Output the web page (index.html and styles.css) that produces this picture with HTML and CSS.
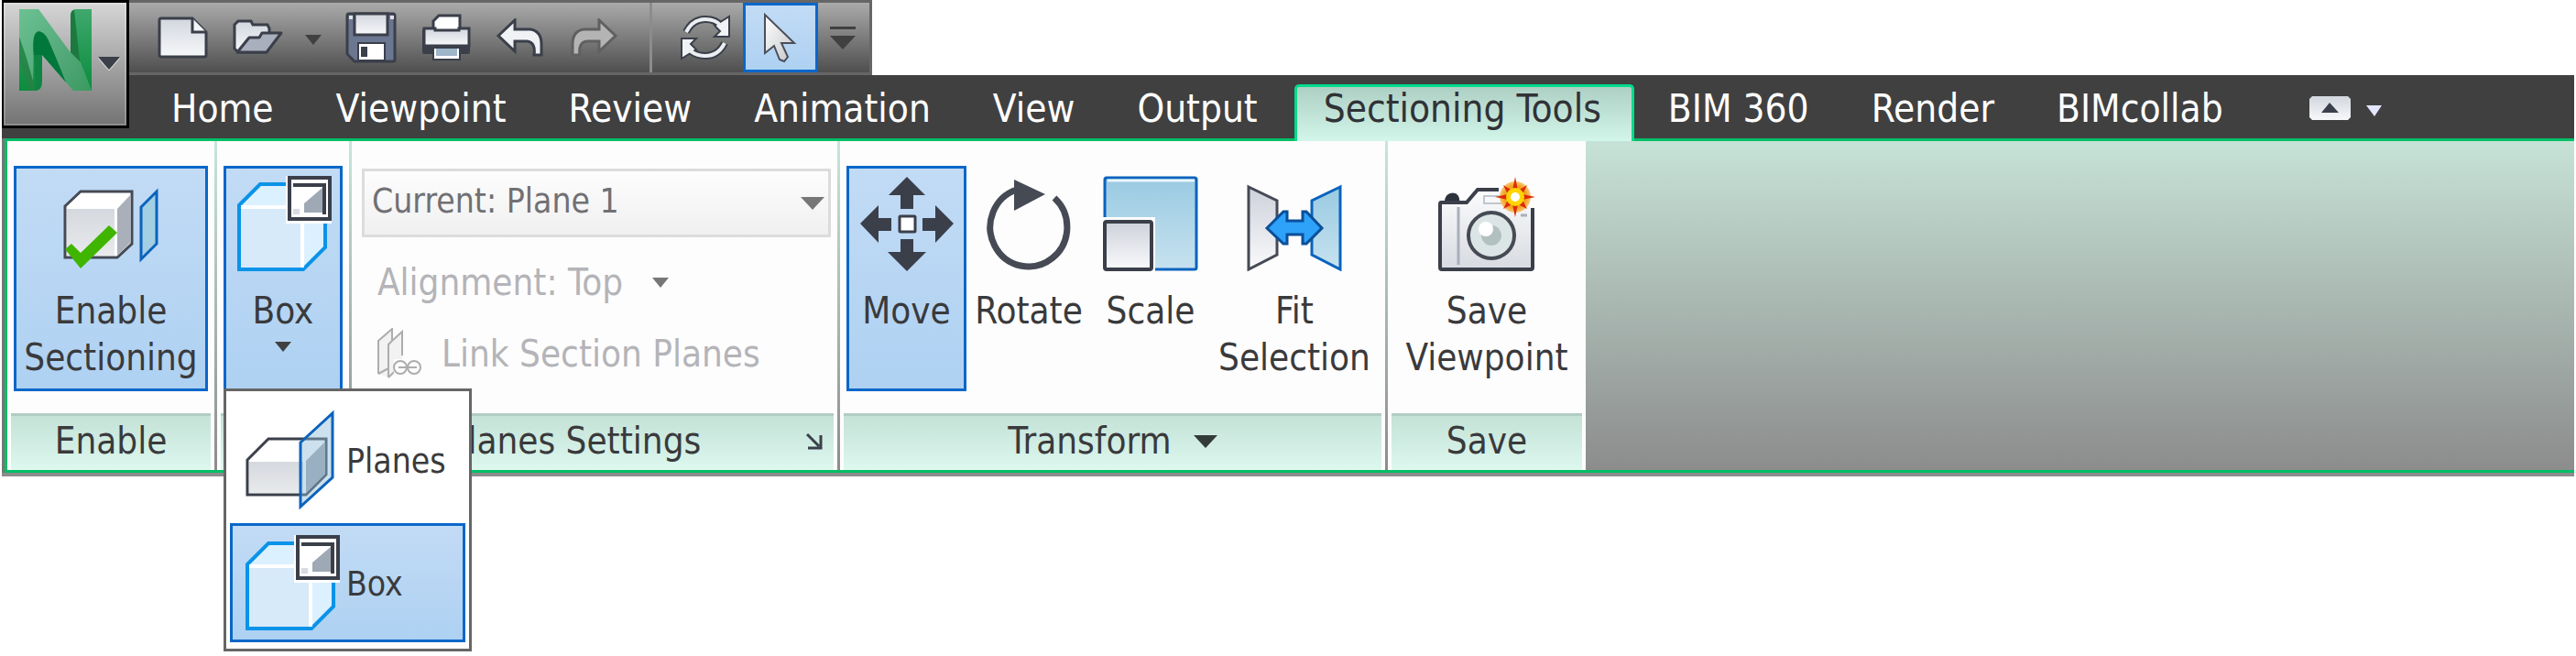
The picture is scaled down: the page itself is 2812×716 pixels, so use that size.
FILE: index.html
```html
<!DOCTYPE html>
<html lang="en">
<head>
<meta charset="utf-8">
<title>Sectioning Tools</title>
<link rel="stylesheet" href="styles.css">
</head>
<body>
<div class="app">
  <header class="head">
    <button class="app-button" type="button" aria-label="Application menu">
      <svg width="134" height="134" viewBox="4 3 134 134">
        <defs>
          <linearGradient id="n1" x1="0" y1="0" x2="1" y2="1"><stop offset="0" stop-color="#6cc192"/><stop offset=".6" stop-color="#52a878"/><stop offset="1" stop-color="#3a9a60"/></linearGradient>
          <linearGradient id="n2" x1="0" y1="0" x2="0" y2="1"><stop offset="0" stop-color="#3fa86c"/><stop offset="1" stop-color="#0a8c3e"/></linearGradient>
        </defs>
        <path d="M21 10H39L45 40V88Q45 99 38 99H21Z" fill="url(#n2)"/>
        <path d="M21 40L40 99H32L21 66Z" fill="#2f7d48" opacity=".6"/>
        <path d="M77 18Q77 10 83 10H100V99H92L77 60Z" fill="url(#n2)"/>
        <path d="M77 18Q77 11 81 11L88 74L77 60Z" fill="#1c7a41"/>
        <path d="M21 10H42L76 56L88 68L100 99H80L46 60V34L37 44L36 88L28 60L21 40Z" fill="url(#n1)"/>
        <path d="M37 62Q34 36 42 34Q48 34 53 44L64 70L72 90L46 60L45 80Z" fill="#00783c"/>
        <path d="M37 60L46 60V88Q46 99 39 99Z" fill="#0f8443"/>
        <path d="M107 62H131L119 76Z" fill="#3a3f4a"/><path d="M107 63L119 77L131 63" fill="none" stroke="#ddd"/>
      </svg>
    </button>
    <div class="head-rows">
      <div class="quick">
        <button class="q q-new" type="button" aria-label="New"><svg width="56" height="46" viewBox="0 0 56 46"><path d="M3 4Q3 2 5 2H39L54 17V42Q54 44 52 44H5Q3 44 3 42Z" fill="url(#paper)" stroke="#3a3f4a" stroke-width="3"/><path d="M39 2V17H54" fill="#f4f5f7" stroke="#3a3f4a" stroke-width="3"/></svg></button>
        <button class="q q-open" type="button" aria-label="Open"><svg width="56" height="40" viewBox="0 0 56 40"><path d="M2 6L6 2H20L22 6H38L40 10V18L36 36H6L2 32Z" fill="url(#paper)" stroke="#3a3f4a" stroke-width="3"/><path d="M18 20H29L32 15H53L37 36H5Z" fill="#a9afbd" stroke="#3a3f4a" stroke-width="3" stroke-linejoin="round"/></svg></button>
        <button class="q q-open-more" type="button" aria-label="Open options"><svg width="18" height="12" viewBox="0 0 18 12"><path d="M0 1H18L9 12Z" fill="#404040"/></svg></button>
        <button class="q q-save" type="button" aria-label="Save"><svg width="56" height="56" viewBox="0 0 56 56"><path d="M4 2H52Q54 2 54 4V52Q54 54 52 54H10L2 46V4Q2 2 4 2Z" fill="#6b7690" stroke="#3a3f4a" stroke-width="3"/><path d="M10 2H46V25H10Z" fill="url(#paper)" stroke="#3a3f4a" stroke-width="3"/><path d="M4 6H8M49 6H53" stroke="#dfe2e8" stroke-width="4"/><path d="M14 34H43V53H14Z" fill="#fff" stroke="#3a3f4a" stroke-width="2"/><path d="M17 38H24V49H17Z" fill="#3a3f4a"/></svg></button>
        <button class="q q-print" type="button" aria-label="Print"><svg width="56" height="52" viewBox="0 0 56 52"><path d="M2 17H54V42Q54 44 52 44H4Q2 44 2 42Z" fill="#3a3f4a"/><path d="M14 19V8L20 2H43V19Z" fill="#fff" stroke="#3a3f4a" stroke-width="3"/><path d="M4 16H16V18H42V16H53V35H4Z" fill="url(#paper)" stroke="#3a3f4a" stroke-width="3"/><path d="M14 37H43V50H14Z" fill="#fff" stroke="#3a3f4a" stroke-width="2"/><path d="M17 38H40V46H17Z" fill="#9fb6ca"/></svg></button>
        <button class="q q-undo" type="button" aria-label="Undo"><svg width="52" height="42" viewBox="0 0 52 42"><path d="M3 19L21 2V12H38Q50 14 50 28V40H42Q44 26 34 25H21V36Z" fill="#f1f2f5" stroke="#3a3f4a" stroke-width="3"/></svg></button>
        <button class="q q-redo" type="button" aria-label="Redo"><svg width="52" height="42" viewBox="0 0 52 42"><path d="M49 19L31 2V12H14Q2 14 2 28V40H10Q8 26 18 25H31V36Z" fill="#b4b4b4" stroke="#606060" stroke-width="3"/></svg></button>
        <span class="q-line"></span>
        <button class="q q-refresh" type="button" aria-label="Refresh"><svg width="56" height="50" viewBox="0 0 56 50"><g fill="none" stroke="#3a3f4a" stroke-width="8"><path d="M7 19Q14 5 28 5Q39 5 45 12"/><path d="M49 31Q42 45 28 45Q17 45 10 38"/></g><path d="M54 2V24H38L44 18L38 12Z" fill="#f1f2f5" stroke="#3a3f4a" stroke-width="2"/><path d="M2 48V26H18L12 32L18 38Z" fill="#f1f2f5" stroke="#3a3f4a" stroke-width="2"/><g fill="none" stroke="#eceef2" stroke-width="4"><path d="M7 19Q14 5 28 5Q39 5 45 12"/><path d="M49 31Q42 45 28 45Q17 45 10 38"/></g></svg></button>
        <button class="q q-select" type="button" aria-label="Select" aria-pressed="true"><svg width="40" height="58" viewBox="0 0 40 58"><path d="M3 4V46L13 38L19 53L24 55L28 50L21 35H35Z" fill="url(#arrow)" stroke="#4a4f5a" stroke-width="2"/></svg></button>
        <button class="q q-custom" type="button" aria-label="Customize toolbar"><svg width="28" height="26" viewBox="0 0 28 26"><path d="M0 1H28V4H0ZM0 11H28L14 26Z" fill="#404040"/></svg></button>
      </div>
      <nav class="tabs">
        <a class="tab" href="#home">Home</a>
        <a class="tab" href="#viewpoint">Viewpoint</a>
        <a class="tab" href="#review">Review</a>
        <a class="tab" href="#animation">Animation</a>
        <a class="tab" href="#view">View</a>
        <a class="tab" href="#output">Output</a>
        <a class="tab tab-active" href="#sectioning" aria-current="page">Sectioning Tools</a>
        <a class="tab" href="#bim360">BIM 360</a>
        <a class="tab" href="#render">Render</a>
        <a class="tab" href="#bimcollab">BIMcollab</a>
        <button class="fold" type="button" aria-label="Minimize ribbon"><svg width="45" height="26" viewBox="0 0 45 26"><path d="M3 0H42L45 3V23L42 26H3L0 23V3Z" fill="url(#paper)"/><path d="M13 18L22 7L32 18Z" fill="#3a3f4a"/></svg></button>
        <button class="fold-more" type="button" aria-label="Ribbon options"><svg width="17" height="12" viewBox="0 0 17 12"><path d="M0 0H17L9 12Z" fill="#e4e6ff"/></svg></button>
      </nav>
    </div>
  </header>

  <main class="ribbon">
    <section class="panel p-enable">
      <div class="tools">
        <button class="tool tool-on t-enable" type="button" aria-pressed="true">
          <svg class="icon" width="106" height="104" viewBox="0 0 106 104">
            <path d="M3 33L20 17H76V74L60 89H3Z" fill="#fff" stroke="#454a54" stroke-width="3"/>
            <path d="M5 36H57V87H5Z" fill="url(#grey)"/><path d="M60 36L75 20V72L60 87Z" fill="#a9b0ba"/>
            <path d="M86 34L103 17V74L86 91Z" fill="#a3cfe3" stroke="#0a63bd" stroke-width="3"/>
            <path d="M3 80L10 74L20 84L51 54L60 62L20 101Z" fill="#3fb500"/>
          </svg>
          <span>Enable<br>Sectioning</span>
        </button>
      </div>
      <h2 class="title">Enable</h2>
    </section>
    <section class="panel p-mode">
      <div class="tools">
        <button class="tool tool-on t-box" type="button" aria-expanded="true">
          <svg class="icon" width="106" height="104" viewBox="0 0 106 104"><use href="#box"/></svg>
          <span>Box</span>
          <svg class="caret" width="18" height="11" viewBox="0 0 18 11"><path d="M0 0H18L9 11Z" fill="#404040"/></svg>
        </button>
        <div class="menu">
          <button class="item" type="button">
            <svg width="106" height="108" viewBox="0 0 106 108">
              <path d="M5 54L28 31H91V70L69 92H5Z" fill="#fff" stroke="#3a3f4a" stroke-width="3"/>
              <path d="M7 56H66V90H7Z" fill="url(#grey)"/><path d="M69 55L90 34V69L69 90Z" fill="#a0a7b1"/>
              <path d="M63 35L98 3V73L63 105Z" fill="#8ebdd6" fill-opacity=".45" stroke="#0a63bd" stroke-width="3"/>
            </svg>
            <span>Planes</span>
          </button>
          <button class="item item-on" type="button">
            <svg width="106" height="104" viewBox="0 0 106 104"><use href="#box"/></svg>
            <span>Box</span>
          </button>
        </div>
      </div>
      <div class="title"></div>
    </section>
    <section class="panel p-planes">
      <div class="tools form">
        <div class="combo">
          <select aria-label="Current plane" disabled><option>Current: Plane 1</option></select>
          <svg width="26" height="14" viewBox="0 0 26 14"><path d="M0 0H26L13 14Z" fill="#777"/></svg>
        </div>
        <button class="line" type="button" disabled><span>Alignment: Top</span><svg width="18" height="11" viewBox="0 0 18 11"><path d="M0 0H18L9 11Z" fill="#777"/></svg></button>
        <button class="line line-link" type="button" disabled><svg width="48" height="56" viewBox="0 0 48 56" fill="#f2f2f2" stroke="#adadad" stroke-width="2"><path d="M1 14L16 1V14L27 4V30V45L13 54L1 50Z" stroke="none"/><path d="M1 50V14L16 1V14L27 4V30M12 54V18L16 14M12 44L1 50M12 54L18 48" fill="none"/><path d="M18 34H48V54H18Z" fill="#fdfdfd" stroke="none"/><g fill="none"><circle cx="25" cy="43" r="7"/><circle cx="40" cy="43" r="7"/><path d="M23 43H43"/></g></svg><span>Link Section Planes</span></button>
      </div>
      <div class="title"><h2>Planes Settings</h2><button class="launch" type="button" aria-label="Planes settings dialog"><svg width="18" height="18" viewBox="0 0 18 18" fill="none" stroke="#3a3f4a" stroke-width="3"><path d="M1 1L14 14M16 2V16H2"/></svg></button></div>
    </section>
    <section class="panel p-transform">
      <div class="tools">
        <button class="tool tool-on t-move" type="button" aria-pressed="true">
          <svg class="icon" width="106" height="104" viewBox="0 0 106 104">
            <path d="M53 1L73 21H60V36H46V21H33ZM53 104L74 83H60V69H46V83H32ZM2 52L22 32V46H36V60H22V73ZM104 52L84 32V46H70V60H84V73Z" fill="#3a3f4a"/>
            <rect x="45" y="44" width="17" height="17" rx="1" fill="#fff" stroke="#3a3f4a" stroke-width="3"/>
          </svg>
          <span>Move</span>
        </button>
        <button class="tool t-rotate" type="button">
          <svg class="icon" width="106" height="104" viewBox="0 0 106 104">
            <path d="M81 24A42 43 0 1 1 40 15" fill="none" stroke="#454a54" stroke-width="7"/>
            <path d="M37 4L71 20L37 38Z" fill="#454a54"/>
          </svg>
          <span>Rotate</span>
        </button>
        <button class="tool t-scale" type="button">
          <svg class="icon" width="106" height="104" viewBox="0 0 106 104">
            <rect x="3" y="2" width="100" height="100" rx="2" fill="url(#blue)" stroke="#0a63bd" stroke-width="3"/><path d="M6 5H101" stroke="#e8f5fb" stroke-width="3"/>
            <path d="M0 45H58V104H0Z" fill="#fff"/><rect x="3" y="50" width="51" height="52" rx="2" fill="url(#silver)" stroke="#3a3f4a" stroke-width="4"/>
          </svg>
          <span>Scale</span>
        </button>
        <button class="tool t-fit" type="button">
          <svg class="icon" width="106" height="104" viewBox="0 0 106 104">
            <path d="M3 12L34 27V86L3 102Z" fill="url(#silver)" stroke="#454a54" stroke-width="3"/>
            <path d="M103 12L72 27V86L103 102Z" fill="url(#blue)" stroke="#0a63bd" stroke-width="3"/>
            <path d="M23 57L41 39H45V49H62V39H66L83 57L66 74H62V64H45V74H41Z" fill="#2ea1f8" stroke="#0a4f9a" stroke-width="3"/>
          </svg>
          <span>Fit<br>Selection</span>
        </button>
      </div>
      <div class="title"><h2>Transform</h2><svg width="26" height="14" viewBox="0 0 26 14"><path d="M0 0H26L13 14Z" fill="#333b38"/></svg></div>
    </section>
    <section class="panel p-save">
      <div class="tools">
        <button class="tool t-save" type="button">
          <svg class="icon" width="106" height="104" viewBox="0 0 106 104">
            <path d="M8 29Q9 20 16 20Q22 20 22 29Z" fill="#2d333d" stroke="#2d333d" stroke-width="3"/>
            <path d="M2 30H31L43 15H70L103 36V100Q103 102 101 102H4Q2 102 2 100Z" fill="url(#camera)"/>
            <path d="M66 15H43L31 29H3Q2 29 2 31V100Q2 102 4 102H101Q103 102 103 100V35" fill="none" stroke="#3a3f4a" stroke-width="4"/>
            <path d="M22 34V97" stroke="#a9afbb" stroke-width="3"/><path d="M50 22H70V30H50Z" fill="none" stroke="#c1c6cf" stroke-width="2"/><path d="M90 43H97" stroke="#a9afbb" stroke-width="3"/>
            <circle cx="58" cy="65" r="25" fill="#dce5e5" stroke="#454a54" stroke-width="4"/>
            <circle cx="58" cy="65" r="11" fill="#b3c0c0"/><circle cx="52" cy="58" r="8" fill="#fff"/>
            <circle cx="84" cy="23" r="17" fill="url(#sun)"/>
            <path d="M84 1L87 16L97 10L92 20L106 23L92 26L97 36L87 31L84 45L81 31L71 36L76 26L62 23L76 20L71 10L81 16Z" fill="#dd2a0a"/>
            <circle cx="84" cy="23" r="10" fill="#ffd400"/><circle cx="84" cy="23" r="5" fill="#fff"/>
          </svg>
          <span>Save<br>Viewpoint</span>
        </button>
      </div>
      <h2 class="title">Save</h2>
    </section>
  </main>
</div>
<svg class="defs" width="0" height="0" aria-hidden="true">
  <defs>
    <linearGradient id="paper" x1="0" y1="0" x2="0" y2="1"><stop offset="0" stop-color="#d2d6de"/><stop offset="1" stop-color="#f7f8fa"/></linearGradient>
    <linearGradient id="arrow" x1="0" y1="0" x2="1" y2="1"><stop offset="0" stop-color="#fff"/><stop offset="1" stop-color="#c4c6ca"/></linearGradient>
    <linearGradient id="grey" x1="0" y1="0" x2="0" y2="1"><stop offset="0" stop-color="#d5d8de"/><stop offset="1" stop-color="#e8eaec"/></linearGradient>
    <linearGradient id="silver" x1="0" y1="0" x2="0" y2="1"><stop offset="0" stop-color="#ced1db"/><stop offset="1" stop-color="#fafafc"/></linearGradient>
    <linearGradient id="blue" x1="0" y1="0" x2="0" y2="1"><stop offset="0" stop-color="#99cae2"/><stop offset="1" stop-color="#c7e2ef"/></linearGradient>
    <linearGradient id="camera" x1="0" y1="0" x2="0" y2="1"><stop offset="0" stop-color="#fcfcfd"/><stop offset="1" stop-color="#d7dae1"/></linearGradient>
    <radialGradient id="sun"><stop offset="0" stop-color="#ffe14a"/><stop offset=".7" stop-color="#f3a01c"/><stop offset="1" stop-color="#f9c878"/></radialGradient>
    <g id="box">
      <path d="M5 32L28 9H99V78L75 102H5Z" fill="#dcf1ff" stroke="#0a93e8" stroke-width="4"/>
      <path d="M7 34H73V100H7Z" fill="#d7eaf9"/><path d="M7 34H74V100M74 34L97 11" fill="none" stroke="#fff" stroke-width="4"/>
      <path d="M56 0H106V52H56Z" fill="#fff"/><rect x="60" y="2" width="44" height="45" fill="#fff" stroke="#3a3f4a" stroke-width="4"/>
      <path d="M76 40V30L97 12V40Z" fill="#9fa9b5"/><path d="M64 10H98V42" fill="none" stroke="#3a3f4a" stroke-width="4"/><path d="M64 36H71V42H64Z" fill="#d9dbe2"/>
    </g>
  </defs>
</svg>
</body>
</html>
```

FILE: styles.css
```css
* { box-sizing: border-box; }
body { margin: 0; background: #fff; color: #3a3a3c; font-family: "DejaVu Sans Condensed", "Noto Sans", sans-serif; font-size: 40px; line-height: 51px; }
button, select { margin: 0; padding: 0; border: 0; background: none; color: inherit; font: inherit; }
h2 { margin: 0; font: inherit; }
svg { display: block; flex: none; }
.defs { position: absolute; }
.app { min-height: 100vh; padding: 0 2px; }

.head { display: flex; background: linear-gradient(#fff 82px, #404040 82px); }
.app-button { display: flex; width: 139px; height: 140px; flex: none; border: 3px solid #000; border-left-width: 2px; background: linear-gradient(#d6d6d6, #737373); box-shadow: inset 0 0 0 2px #ffffff30; }
.head-rows { flex: 1; min-width: 0; }
.quick { display: flex; align-items: center; width: 811px; height: 82px; border: 3px solid #666; border-left: 0; background: linear-gradient(#aaa, #4f4f4f); }
.q { flex: none; display: flex; align-items: center; justify-content: center; }
.q-new { margin-left: 30px; }
.q-open { margin-left: 27px; }
.q-open-more { margin-left: 23px; margin-top: 4px; }
.q-save { margin-left: 26px; }
.q-print { margin-left: 26px; }
.q-undo { margin-left: 26px; }
.q-redo { margin-left: 30px; }
.q-line { width: 3px; height: 76px; margin-left: 34px; background: #8c8c8c; }
.q-refresh { margin-left: 30px; }
.q-select { width: 82px; height: 76px; margin-left: 13px; border: 3px solid #0a67c9; background: linear-gradient(#c2dbf5, #aed1f2); }
.q-custom { margin-left: 13px; }

.tabs { display: flex; align-items: flex-end; height: 69px; font-size: 42px; }
.tab { height: 62px; padding: 0 34px; color: #fff; line-height: 60px; text-decoration: none; white-space: nowrap; }
.tab:first-child { padding-left: 46px; }
.tab-active { position: relative; z-index: 1; padding: 0 33px 0 29px; margin: 0 3px -3px 6px; border: 3px solid #00dc8c; border-bottom: 0; border-radius: 5px 5px 0 0; color: #303236; line-height: 48px; background: linear-gradient(#aed0c4, #d3f6ea); }
.fold { margin: 0 0 20px 60px; }
.fold-more { margin: 0 0 24px 17px; }

.ribbon { display: flex; margin-left: 3px; border: 3px solid #00bf66; border-right: 0; background: linear-gradient(#c6e2d6, #8c8c8c); box-shadow: -3px 0 0 #777, -3px 4px 0 #8c8c8c, 0 4px 0 #8c8c8c; }
.panel { flex: none; display: flex; flex-direction: column; background: #fdfdfd; border-right: 3px solid; border-image: linear-gradient(#c8e6da, #8c8c8c) 1; }
.tools { position: relative; display: flex; padding: 27px 7px 24px; height: 297px; }
.tool { display: flex; flex-direction: column; align-items: center; height: 246px; padding-top: 8px; border: 3px solid transparent; text-align: center; white-space: nowrap; }
.tool-on { border-color: #0a67c9; background: linear-gradient(#c2dbf5, #aed1f2); }
.icon { margin-bottom: 18px; }
.caret { margin-top: 8px; }
.title { display: flex; align-items: center; justify-content: center; height: 62px; margin: 0 4px; padding-bottom: 4px; border-top: 3px solid #b1cdc2; background: linear-gradient(#c5e2d7, #dcf8ef); }
.p-enable { width: 229px; }
.t-enable { flex: 1; }
.p-mode { width: 147px; }
.t-box { flex: 1; }
.p-planes { width: 533px; }
.p-transform { width: 598px; }
.p-save { width: 216px; border-right: 0; }
.t-move { width: 131px; }
.t-rotate { width: 136px; }
.t-scale { width: 130px; }
.t-fit { flex: 1; }
.t-save { flex: 1; }

.form { flex-direction: column; align-items: flex-start; padding: 30px 7px 0 11px; }
.combo { position: relative; width: 100%; }
.combo select { display: block; width: 100%; height: 75px; padding: 0 0 5px 8px; border: 3px solid #dcdcde; background: linear-gradient(#fdfdfd, #f0f0f0); color: #707074; opacity: 1; font-size: 37px; appearance: none; }
.combo svg { position: absolute; right: 7px; top: 31px; pointer-events: none; }
.line { display: flex; align-items: center; gap: 22px; margin: 24px 0 0 17px; color: #b4b4b8; white-space: nowrap; }
.line:not(.line-link) { gap: 32px; }
.line-link { margin-top: 24px; }
.p-planes .title { padding-right: 12px; }
.p-planes .title h2 { flex: 1; padding-right: 14px; text-align: center; }
.p-transform .title { gap: 24px; }

.menu { position: absolute; z-index: 2; top: 270px; left: 7px; width: 271px; padding: 6px 4px 7px; border: 3px solid #666; background: #fff; }
.item { display: flex; align-items: center; gap: 7px; width: 100%; height: 138px; padding-left: 14px; font-size: 37px; }
.item-on { height: 130px; border: 3px solid #0a67c9; padding-left: 11px; background: linear-gradient(#c2dbf5, #aed1f2); }
.item span { padding-top: 3px; }
```
